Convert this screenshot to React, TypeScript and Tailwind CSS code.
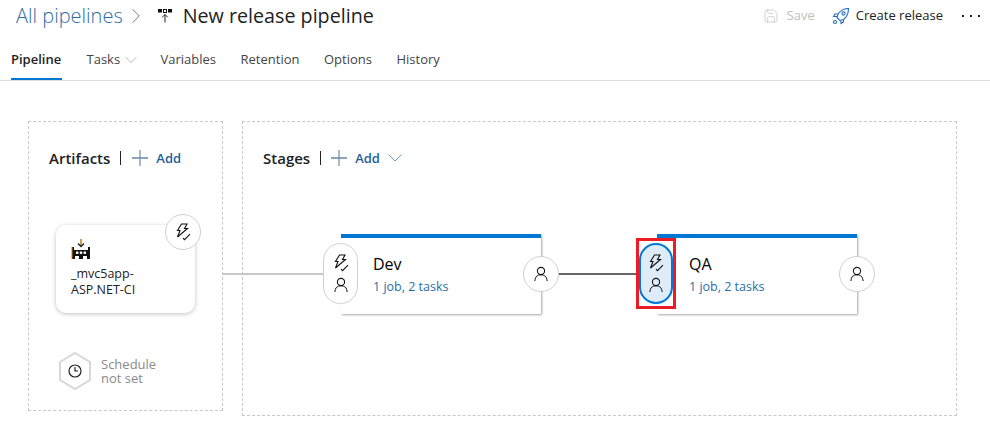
import { ChevronDown, ChevronRight, Save } from "lucide-react";

const Bolt = () => (
  <svg width="18" height="18" viewBox="0 0 18 18" fill="none" stroke="#111" strokeWidth="1.1">
    <path d="M7.5 1h5.5l-2.5 4.5h3L3.5 14l2.5-6.5H3.5z" />
    <path d="M9 15.2l1.5 1.5 5.5-5.5" />
  </svg>
);

const Person = () => (
  <svg width="16" height="16" viewBox="0 0 16 16" fill="none" stroke="#111" strokeWidth="1.1">
    <circle cx="8" cy="5" r="3.6" />
    <path d="M1.8 15c0-3.6 2.6-6.2 6.2-6.2s6.2 2.6 6.2 6.2" />
  </svg>
);

const AddPlus = () => (
  <svg width="16" height="16" viewBox="0 0 16 16" fill="none" stroke="#6f8cab" className="shrink-0">
    <path d="M8 0v16" strokeWidth="1.2" />
    <path d="M0 8h16" strokeWidth="1.6" />
  </svg>
);

const PipelineIcon = () => (
  <svg width="16" height="16" viewBox="0 0 16 16" fill="none">
    <rect x="1" y="1" width="4" height="3.5" fill="#111" />
    <rect x="6.5" y="1.5" width="3" height="3" stroke="#111" />
    <rect x="11" y="1" width="4" height="3.5" fill="#111" />
    <path d="M8 14.5V6.5M5.2 9.3L8 6.5l2.8 2.8" stroke="#222" />
  </svg>
);

const ArtifactIcon = () => (
  <svg width="20" height="21" viewBox="0 0 20 21" fill="none">
    <path d="M10 0v7" stroke="#b5730f" strokeWidth="1.4" />
    <path d="M7 4.5L10 7.5 13 4.5" stroke="#222" strokeWidth="1.4" />
    <path d="M1 20V8h2v3h14V8h2v12z" fill="#111" />
    <rect x="5" y="12.5" width="2.4" height="2.4" fill="#fff" />
    <rect x="8.8" y="12.5" width="2.4" height="2.4" fill="#fff" />
    <rect x="12.6" y="12.5" width="2.4" height="2.4" fill="#fff" />
    <rect x="4" y="17" width="4" height="3" fill="#fff" />
    <rect x="12" y="17" width="4" height="3" fill="#fff" />
    <rect x="0.5" y="8" width="1" height="12" fill="#d67f0a" />
  </svg>
);

const RocketIcon = () => (
  <svg width="18" height="18" viewBox="0 0 18 18" fill="none" stroke="#1f6fc0" strokeWidth="1.1" className="shrink-0">
    <path d="M16.5 1.5C12 1.5 8.5 3.5 6 7l-1 3.5 3 3 3.5-1c3.5-2.5 5-6 5-11z" />
    <circle cx="11.5" cy="6.5" r="1.6" />
    <path d="M6 7H3L1.5 9.5h3.5M11.5 12.5v2.5L9 16.5V13.5" />
    <circle cx="3" cy="15" r="1.5" />
  </svg>
);

const RoundBadge = ({ className }: { className: string }) => (
  <div className={`absolute z-10 flex h-9 w-9 items-center justify-center rounded-full border border-[#d0d0d0] bg-white ${className}`}>
    <Person />
  </div>
);

const StageCard = ({ name, active }: { name: string; active?: boolean }) => (
  <div className="relative h-20 w-[200px] border-t-4 border-[#0078d4] bg-white pl-8 pt-[15px] shadow-[1px_1px_2px_rgba(0,0,0,0.35)]">
    <div className="text-[16px] leading-[22px] text-black">{name}</div>
    <div className="mt-[4px] text-[12.5px] leading-[16px] text-[#2a6fa8]">1 job, 2 tasks</div>
    <div
      className={
        active
          ? "absolute -left-[18px] top-[5px] z-10 flex h-[61px] w-[34px] flex-col items-center justify-center gap-[5px] rounded-full border-2 border-[#0078d4] bg-[#deecf9]"
          : "absolute -left-[18px] top-[5px] z-10 flex h-[61px] w-[35px] flex-col items-center justify-center gap-[5px] rounded-full border border-[#d0d0d0] bg-white"
      }
    >
      <Bolt />
      <Person />
    </div>
    <RoundBadge className="-right-[18px] top-[18px]" />
    {active && <div className="absolute -left-[21px] top-0 z-20 h-[71px] w-10 border-[3px] border-[#ed1c24]" />}
  </div>
);

export default function App() {
  return (
    <div className="h-[439px] w-[990px] overflow-hidden bg-white font-['Open_Sans','Noto_Sans',sans-serif] text-[#222]">
      <div className="flex h-8 items-center pl-4 pr-[10px]">
        <span className="text-[20px] font-light text-[#2f6ea5]">All pipelines</span>
        <ChevronRight className="h-[26px] w-[26px] text-[#777]" strokeWidth={0.9} />
        <span className="ml-2"><PipelineIcon /></span>
        <span className="ml-[10px] text-[19.7px] text-[#222]">New release pipeline</span>
        <Save className="ml-auto h-4 w-4 text-[#c8c8c8]" strokeWidth={1.25} />
        <span className="ml-[8px] text-[13px] text-[#c0c0c0]">Save</span>
        <span className="ml-[17px]"><RocketIcon /></span>
        <span className="ml-[6px] text-[13px]">Create release</span>
        <div className="ml-[19px] flex gap-[6px]">
          <span className="h-[2px] w-[2px] bg-[#222]" />
          <span className="h-[2px] w-[2px] bg-[#222]" />
          <span className="h-[2px] w-[2px] bg-[#222]" />
        </div>
      </div>

      <div className="mt-[13px] flex h-9 gap-[24.5px] border-b border-[#dcdcdc] pl-[11px] pt-[5px] text-[13px] text-[#444]">
        <div className="h-[30px] w-[51px] border-b-2 border-[#0078d4] font-semibold text-[#222]">Pipeline</div>
        <div className="flex h-fit w-[49.5px] items-center">
          Tasks <ChevronDown className="ml-[1px] h-5 w-5 shrink-0 text-[#aaa]" strokeWidth={1} />
        </div>
        <div>Variables</div>
        <div>Retention</div>
        <div>Options</div>
        <div>History</div>
      </div>

      <div className="mt-10 flex items-start gap-[19px] pl-7">
        <div className="relative h-[290px] w-[195px] border border-dashed border-[#c8c8c8] pl-5 pt-[25px]">
          <div className="flex items-center text-[15px] font-semibold text-[#222]">
            Artifacts
            <span className="ml-[10px] h-[14px] w-px bg-[#222]" />
            <span className="ml-[11px]"><AddPlus /></span>
            <span className="ml-2 text-[13px] text-[#1f5f99]">Add</span>
          </div>
          <div className="relative ml-[7px] mt-[55px] h-[88px] w-[139px] rounded-[10px] bg-white pl-[15px] pt-[14px] shadow-[0_1px_4px_rgba(0,0,0,0.25)]">
            <ArtifactIcon />
            <div className="mt-[6px] text-[12.5px] leading-[16px]">
              _mvc5app-
              <br />
              ASP.NET-CI
            </div>
            <div className="absolute -right-[6px] -top-[11px] flex h-9 w-9 items-center justify-center rounded-full border border-[#d0d0d0] bg-white">
              <Bolt />
            </div>
            <div className="absolute left-[166px] top-[48px] h-[2px] w-[104px] bg-[#c8c8c8]" />
          </div>
          <div className="ml-[9px] mt-[38px] flex items-center gap-[9px]">
            <svg width="34" height="40" viewBox="0 0 34 40" fill="none">
              <path d="M17 2l15 9v18l-15 9-15-9V11z" stroke="#d8d8d8" strokeWidth="2" />
              <circle cx="17" cy="20" r="6" stroke="#222" strokeWidth="1.2" />
              <path d="M17 16v4h3" stroke="#222" strokeWidth="1.2" />
            </svg>
            <div className="mt-[1px] text-[13px] leading-[14px] text-[#8a8a8a]">
              Schedule
              <br />
              not set
            </div>
          </div>
        </div>

        <div className="h-[295px] w-[715px] border border-dashed border-[#c8c8c8] pl-5 pt-[25px]">
          <div className="flex items-center text-[15px] font-semibold text-[#222]">
            Stages
            <span className="ml-[10px] h-[14px] w-px bg-[#222]" />
            <span className="ml-[10px]"><AddPlus /></span>
            <span className="ml-2 text-[13px] text-[#1f5f99]">Add</span>
            <svg width="14" height="8" viewBox="0 0 14 8" fill="none" stroke="#6f9cc8" className="ml-2">
              <path d="M0.5 0.5L7 7l6.5-6.5" />
            </svg>
          </div>
          <div className="ml-[78px] mt-[64px] flex items-center">
            <StageCard name="Dev" />
            <div className="h-[2px] w-[116px] bg-[#666]" />
            <StageCard name="QA" active />
          </div>
        </div>
      </div>
    </div>
  );
}
